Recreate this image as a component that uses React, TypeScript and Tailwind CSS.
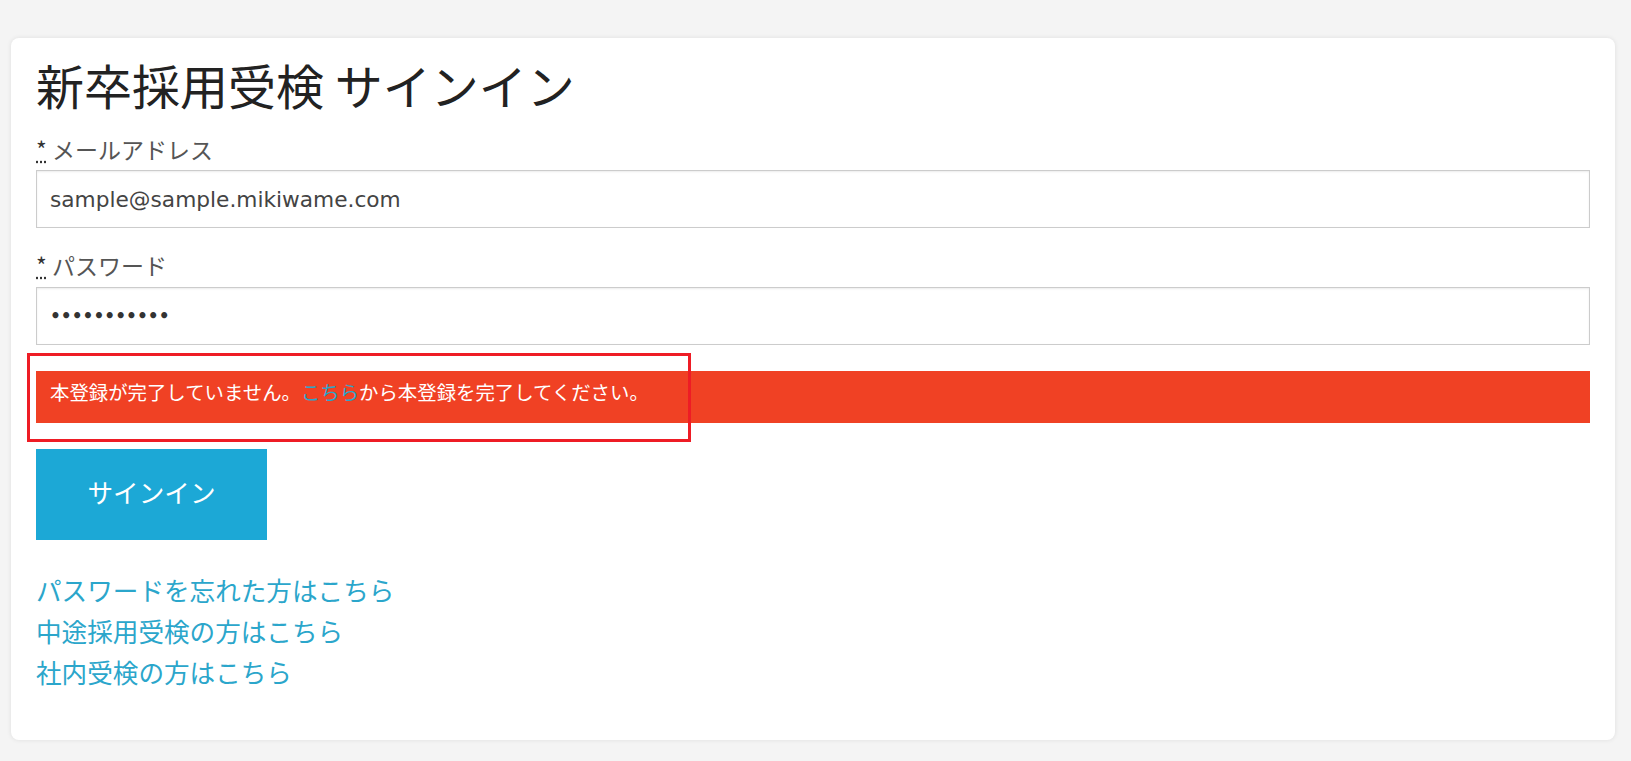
import React from "react";

const jp = "font-['Noto_Sans_CJK_JP','Noto_Sans',sans-serif]";

function FieldLabel({ text }: { text: string }) {
  return (
    <label className={`block text-[23px] leading-none text-[#555] ${jp}`}>
      <abbr title="required" className="text-[#333] underline decoration-dotted">*</abbr> {text}
    </label>
  );
}

export default function App() {
  return (
    <div className={`min-h-screen bg-[#f4f4f4] pt-[38px] pl-[11px] pr-[16px] ${jp}`}>
      <div className="bg-white rounded-[8px] shadow-[0_0_5px_rgba(0,0,0,0.09)] px-[25px] pt-[22px] pb-[48px]">
        <h1 className="text-[48px] leading-none text-[#222] font-normal">新卒採用受検 サインイン</h1>

        <form className="mt-[30px]" onSubmit={(e) => e.preventDefault()}>
          <FieldLabel text="メールアドレス" />
          <input
            type="email"
            readOnly
            defaultValue="sample@sample.mikiwame.com"
            className="mt-[9px] block w-full h-[58px] border border-[#cccccc] bg-white px-[13px] text-[21.7px] text-[#444] font-['DejaVu_Sans',sans-serif] shadow-[inset_0_1px_2px_rgba(0,0,0,0.08)] outline-none"
          />

          <div className="mt-[26px]">
            <FieldLabel text="パスワード" />
          </div>
          <input
            type="password"
            readOnly
            defaultValue="12345678901"
            className="mt-[10px] block w-full h-[58px] border border-[#cccccc] bg-white px-[13px] text-[17px] font-bold text-[#333] font-['DejaVu_Sans',sans-serif] shadow-[inset_0_1px_2px_rgba(0,0,0,0.08)] outline-none"
          />

          {/* alert, with the red annotation frame over it */}
          <div className="relative mt-[26px]">
            <div className="h-[52px] bg-[#f04124] pl-[14px] pt-[11px] text-[19.4px] leading-none text-white">
              本登録が完了していません。<a href="#" className="text-[#2ba6cb]">こちら</a>から本登録を完了してください。
            </div>
            <div className="absolute -left-[9px] -top-[18px] w-[664px] h-[89px] border-[3px] border-[#ee1c25] pointer-events-none" />
          </div>

          <button
            type="submit"
            className="mt-[26px] flex items-center justify-center w-[231px] h-[91px] pb-[6px] bg-[#1ca8d6] text-white text-[25.6px] leading-none"
          >
            サインイン
          </button>
        </form>

        <div className="mt-[29px] flex flex-col items-start text-[25.6px] leading-[41px] text-[#2ba6cb]">
          <a href="#">パスワードを忘れた方はこちら</a>
          <a href="#">中途採用受検の方はこちら</a>
          <a href="#">社内受検の方はこちら</a>
        </div>
      </div>
    </div>
  );
}
